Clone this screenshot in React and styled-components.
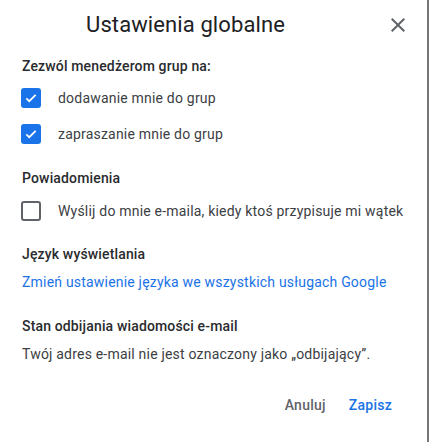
import styled, { createGlobalStyle } from 'styled-components'

const Global = createGlobalStyle`
  html, body {
    margin: 0;
    padding: 0;
    background: #767676;
  }
  body {
    font-family: Roboto, "Noto Sans", "Liberation Sans", sans-serif;
    -webkit-font-smoothing: antialiased;
  }
`

const Dialog = styled.div`
  width: 427px;
  height: 442px;
  background: #fff;
  display: flex;
  flex-direction: column;
  box-sizing: border-box;
`

const Header = styled.div`
  display: flex;
  align-items: center;
  padding-left: 22px;
  height: 48px;
  margin-top: 1px;
`

const Title = styled.h1`
  flex: 1;
  margin: 0;
  text-align: center;
  font-size: 22px;
  font-weight: 400;
  color: #202124;
  line-height: 28px;
  letter-spacing: 0.1px;
`

const CloseButton = styled.button`
  width: 48px;
  height: 48px;
  margin-left: 25px;
  margin-right: 5px;
  border: 0;
  background: none;
  padding: 0;
  display: flex;
  align-items: center;
  justify-content: center;
  color: #5f6368;
  cursor: pointer;
`

const Body = styled.div`
  padding: 0 22px;
  display: flex;
  flex-direction: column;
`

const Section = styled.section`
  display: flex;
  flex-direction: column;
  margin-top: ${p => p.$top}px;
`

const SectionTitle = styled.h2`
  margin: 0;
  font-size: 14px;
  font-weight: 500;
  line-height: 20px;
  color: #2a2b2e;
  letter-spacing: 0.15px;
`

const Options = styled.div`
  margin-top: ${p => p.$top}px;
`

const Row = styled.label`
  display: flex;
  align-items: center;
  height: 36px;
  font-size: 14px;
  color: #3c4043;
  letter-spacing: 0.2px;
`

const Box = styled.span`
  width: 20px;
  height: 20px;
  box-sizing: border-box;
  margin-left: -1px;
  margin-right: 17px;
  border-radius: 3px;
  display: flex;
  align-items: center;
  justify-content: center;
  background: ${p => (p.$checked ? '#1a73e8' : '#fff')};
  border: ${p => (p.$checked ? '0' : '2px solid #5f6368')};
`

const Link = styled.a`
  margin-top: 8px;
  font-size: 14px;
  line-height: 20px;
  color: #1a73e8;
  text-decoration: none;
  letter-spacing: 0.2px;
`

const Text = styled.p`
  margin: 8px 0 0;
  font-size: 14px;
  line-height: 20px;
  color: #3c4043;
  letter-spacing: 0.2px;
`

const Footer = styled.div`
  display: flex;
  justify-content: flex-end;
  gap: 7px;
  padding-right: 27px;
  margin-top: 23px;
`

const Button = styled.button`
  height: 36px;
  padding: 0 8px;
  border: 0;
  background: none;
  font-family: inherit;
  font-size: 14px;
  font-weight: 500;
  letter-spacing: 0.25px;
  color: ${p => (p.$primary ? '#1a73e8' : '#5f6368')};
  cursor: pointer;
`

function Checkbox({ checked, label }) {
  return (
    <Row>
      <Box $checked={checked}>
        {checked && (
          <svg width="14" height="14" viewBox="0 0 24 24">
            <path d="M4 12.5l5 5L20 6.5" fill="none" stroke="#fff" strokeWidth="3" />
          </svg>
        )}
      </Box>
      {label}
    </Row>
  )
}

export default function App() {
  return (
    <>
      <Global />
      <Dialog>
        <Header>
          <Title>Ustawienia globalne</Title>
          <CloseButton aria-label="Zamknij">
            <svg width="24" height="24" viewBox="0 0 24 24">
              <path
                fill="currentColor"
                d="M19 6.41L17.59 5 12 10.59 6.41 5 5 6.41 10.59 12 5 17.59 6.41 19 12 13.41 17.59 19 19 17.59 13.41 12z"
              />
            </svg>
          </CloseButton>
        </Header>
        <Body>
          <Section $top={7}>
            <SectionTitle>Zezwól menedżerom grup na:</SectionTitle>
            <Options $top={4}>
              <Checkbox checked label="dodawanie mnie do grup" />
              <Checkbox checked label="zapraszanie mnie do grup" />
            </Options>
          </Section>
          <Section $top={16}>
            <SectionTitle>Powiadomienia</SectionTitle>
            <Options $top={5}>
              <Checkbox label="Wyślij do mnie e-maila, kiedy ktoś przypisuje mi wątek" />
            </Options>
          </Section>
          <Section $top={15}>
            <SectionTitle>Język wyświetlania</SectionTitle>
            <Link href="#">Zmień ustawienie języka we wszystkich usługach Google</Link>
          </Section>
          <Section $top={24}>
            <SectionTitle>Stan odbijania wiadomości e-mail</SectionTitle>
            <Text>Twój adres e-mail nie jest oznaczony jako „odbijający”.</Text>
          </Section>
        </Body>
        <Footer>
          <Button>Anuluj</Button>
          <Button $primary>Zapisz</Button>
        </Footer>
      </Dialog>
    </>
  )
}
